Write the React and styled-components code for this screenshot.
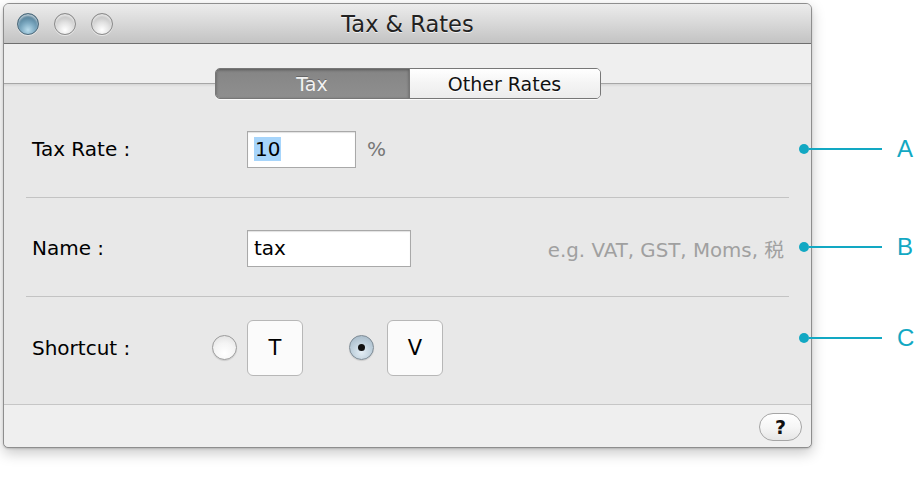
import styled, { createGlobalStyle } from "styled-components";

const GlobalStyle = createGlobalStyle`
  html, body {
    margin: 0;
    padding: 0;
    background: #ffffff;
  }
  body {
    font-family: "DejaVu Sans", "Noto Sans CJK JP", sans-serif;
    color: #111;
  }
`;

const Page = styled.div`
  width: 920px;
  height: 480px;
  padding: 3px 0 0 3px;
  box-sizing: border-box;
  position: relative;
`;

const Window = styled.div`
  width: 809px;
  border: 1px solid #8e8e8e;
  border-radius: 6px 6px 5px 5px;
  background: #e8e8e8;
  box-shadow: 0 5px 14px rgba(0, 0, 0, 0.22), 0 1px 2px rgba(0, 0, 0, 0.15);
  box-sizing: border-box;
`;

const TitleBar = styled.div`
  display: grid;
  grid-template-columns: 1fr auto 1fr;
  align-items: center;
  height: 40px;
  padding: 1px 13px 0;
  border-bottom: 1px solid #6e6e6e;
  border-radius: 5px 5px 0 0;
  background: linear-gradient(to bottom, #ececec 0%, #dadada 45%, #c3c3c3 100%);
  box-sizing: border-box;
`;

const Lights = styled.div`
  display: flex;
  gap: 15px;
  align-items: center;
`;

const Light = styled.span`
  width: 22px;
  height: 22px;
  border-radius: 50%;
  box-sizing: border-box;
  border: 1px solid ${(p) => (p.$active ? "#4d6a7b" : "#8a8a8a")};
  background: ${(p) =>
    p.$active
      ? "radial-gradient(circle at 50% 80%, #b9dcec 0%, #7aa7bf 40%, #4f7b94 75%, #3f6379 100%)"
      : "radial-gradient(circle at 50% 80%, #ffffff 0%, #e2e2e2 40%, #bdbdbd 80%, #a9a9a9 100%)"};
  box-shadow: inset 0 2px 2px rgba(255, 255, 255, 0.6), 0 1px 0 rgba(255, 255, 255, 0.5);
`;

const Title = styled.div`
  font-size: 22.5px;
  color: #222;
  text-shadow: 0 1px 0 rgba(255, 255, 255, 0.7);
`;

const TabBand = styled.div`
  display: flex;
  justify-content: center;
  align-items: flex-start;
  height: 55px;
  padding-top: 24px;
  box-sizing: border-box;
  background: linear-gradient(
    to bottom,
    #efefef 0px,
    #efefef 39px,
    #a6a6a6 39px,
    #a6a6a6 40px,
    #d6d6d6 40px,
    #e8e8e8 43px
  );
`;

const Segmented = styled.div`
  display: flex;
  height: 31px;
  border: 1px solid #777;
  border-radius: 5px;
  overflow: hidden;
  box-sizing: border-box;
  box-shadow: 0 1px 0 rgba(255, 255, 255, 0.8);
`;

const Segment = styled.div`
  display: flex;
  align-items: center;
  justify-content: center;
  width: ${(p) => p.$width}px;
  font-size: 19px;
  color: ${(p) => (p.$active ? "#f2f2f2" : "#111")};
  background: ${(p) =>
    p.$active
      ? "linear-gradient(to bottom, #858585 0%, #8f8f8f 100%)"
      : "linear-gradient(to bottom, #ffffff 0%, #f4f4f4 50%, #ececec 100%)"};
  box-shadow: ${(p) => (p.$active ? "inset 0 1px 3px rgba(0, 0, 0, 0.35)" : "none")};
  text-shadow: ${(p) => (p.$active ? "0 -1px 0 rgba(0,0,0,0.25)" : "0 1px 0 #fff")};
  & + & {
    border-left: 1px solid #777;
  }
`;

const Rows = styled.div`
  padding: 0 22px;
  background: #e8e8e8;
`;

const Row = styled.div`
  position: relative;
  display: flex;
  align-items: center;
  height: 99px;
  padding-top: 2px;
  border-bottom: 1px solid #c3c3c3;
  box-sizing: border-box;

  &:last-child {
    height: 107px;
    padding: 0 0 6px;
    border-bottom: none;
  }
`;

const Label = styled.div`
  width: ${(p) => p.$width}px;
  flex-shrink: 0;
  padding-left: 6px;
  box-sizing: border-box;
  font-size: 20px;
  color: #000;
`;

const Field = styled.div`
  display: flex;
  align-items: center;
  width: ${(p) => p.$width}px;
  height: 37px;
  padding-left: 6px;
  box-sizing: border-box;
  border: 1px solid #a9a9a9;
  background: #fff;
  box-shadow: inset 0 1px 1px rgba(0, 0, 0, 0.12);
  font-size: 20px;
  color: #000;
`;

const Selected = styled.span`
  background: #a7d5fb;
  padding: 0 1px;
`;

const Unit = styled.span`
  margin-left: 11px;
  font-size: 20px;
  color: #777;
`;

const Hint = styled.span`
  margin-left: auto;
  padding-right: 5px;
  font-size: 19.8px;
  color: #a0a0a0;
`;

const Radio = styled.span`
  display: flex;
  align-items: center;
  justify-content: center;
  width: 25px;
  height: 25px;
  flex-shrink: 0;
  border-radius: 50%;
  box-sizing: border-box;
  border: 1px solid ${(p) => (p.$checked ? "#7d8a94" : "#9b9b9b")};
  background: ${(p) =>
    p.$checked
      ? "radial-gradient(circle at 50% 70%, #e4eef5 0%, #bfd0dc 50%, #9fb3c2 100%)"
      : "radial-gradient(circle at 50% 75%, #ffffff 0%, #f4f4f4 50%, #dcdcdc 100%)"};
  box-shadow: 0 1px 1px rgba(0, 0, 0, 0.12);

  &::after {
    content: "";
    display: ${(p) => (p.$checked ? "block" : "none")};
    width: 7px;
    height: 7px;
    border-radius: 50%;
    background: #111;
  }
`;

const KeyBox = styled.div`
  display: flex;
  align-items: center;
  justify-content: center;
  width: 56px;
  height: 56px;
  margin-left: ${(p) => p.$gap}px;
  flex-shrink: 0;
  border: 1px solid #b7b7b7;
  border-radius: 6px;
  background: #fbfbfb;
  box-sizing: border-box;
  font-size: 21px;
  color: #000;
`;

const ShortcutOption = styled.div`
  display: flex;
  align-items: center;
  & + & {
    margin-left: 46px;
  }
`;

const Callout = styled.div`
  position: absolute;
  left: calc(100% + 10px);
  top: 50%;
  transform: translateY(calc(-50% + ${(p) => p.$shift || 0}px));
  display: flex;
  align-items: center;
`;

const Dot = styled.span`
  width: 10px;
  height: 10px;
  border-radius: 50%;
  background: #12a8c3;
`;

const Leader = styled.span`
  width: 73px;
  height: 2px;
  background: #12a8c3;
`;

const Letter = styled.span`
  margin-left: 15px;
  font-family: "Liberation Sans", Arial, sans-serif;
  font-size: 24px;
  color: #12a8c3;
`;

const Footer = styled.div`
  display: flex;
  justify-content: flex-end;
  align-items: center;
  height: 43px;
  padding-right: 9px;
  border-top: 1px solid #c6c6c6;
  border-radius: 0 0 5px 5px;
  background: #efefef;
  box-sizing: border-box;
`;

const HelpButton = styled.button`
  width: 43px;
  height: 28px;
  margin-top: 1px;
  border: 1.5px solid #a5a5a5;
  border-radius: 14px;
  background: linear-gradient(to bottom, #ffffff 0%, #f6f6f6 50%, #e6e6e6 100%);
  font-family: "DejaVu Sans", sans-serif;
  font-size: 19px;
  font-weight: bold;
  color: #111;
  padding: 0;
`;

const callouts = [
  { letter: "A", shift: 1 },
  { letter: "B" },
  { letter: "C", shift: -13 },
];

export default function App() {
  return (
    <Page>
      <GlobalStyle />
      <Window>
        <TitleBar>
          <Lights>
            <Light $active />
            <Light />
            <Light />
          </Lights>
          <Title>Tax &amp; Rates</Title>
          <div />
        </TitleBar>

        <TabBand>
          <Segmented>
            <Segment $active $width={193}>Tax</Segment>
            <Segment $width={190}>Other Rates</Segment>
          </Segmented>
        </TabBand>

        <Rows>
          <Row>
            <Label $width={221}>Tax Rate :</Label>
            <Field $width={109}>
              <Selected>10</Selected>
            </Field>
            <Unit>%</Unit>
            <Callout $shift={callouts[0].shift}>
              <Dot />
              <Leader />
              <Letter>{callouts[0].letter}</Letter>
            </Callout>
          </Row>

          <Row>
            <Label $width={221}>Name :</Label>
            <Field $width={164}>tax</Field>
            <Hint>e.g. VAT, GST, Moms, 税</Hint>
            <Callout>
              <Dot />
              <Leader />
              <Letter>{callouts[1].letter}</Letter>
            </Callout>
          </Row>

          <Row>
            <Label $width={186}>Shortcut :</Label>
            <ShortcutOption>
              <Radio />
              <KeyBox $gap={10}>T</KeyBox>
            </ShortcutOption>
            <ShortcutOption>
              <Radio $checked />
              <KeyBox $gap={13}>V</KeyBox>
            </ShortcutOption>
            <Callout $shift={callouts[2].shift}>
              <Dot />
              <Leader />
              <Letter>{callouts[2].letter}</Letter>
            </Callout>
          </Row>
        </Rows>

        <Footer>
          <HelpButton>?</HelpButton>
        </Footer>
      </Window>
    </Page>
  );
}
